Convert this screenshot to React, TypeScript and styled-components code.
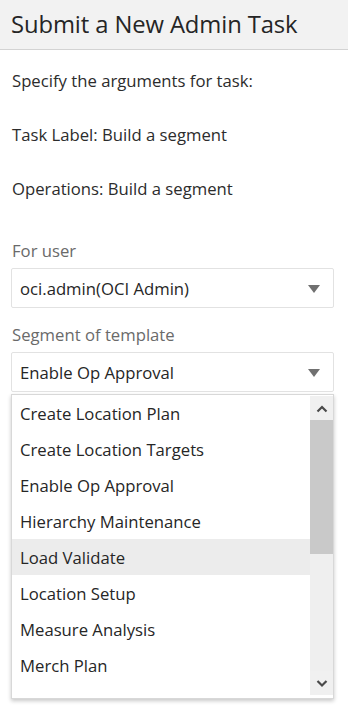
import styled, { createGlobalStyle } from "styled-components";

const GlobalStyle = createGlobalStyle`
  html, body {
    margin: 0;
    padding: 0;
    background: #ffffff;
  }
  body {
    font-family: "Open Sans", "Noto Sans", Arial, sans-serif;
    color: #2c2c2c;
  }
`;

const Page = styled.div`
  width: 348px;
  height: 711px;
  overflow: hidden;
  background: #fff;
`;

const Header = styled.header`
  height: 50px;
  box-sizing: border-box;
  background: #f2f2f2;
  border-bottom: 1px solid #d3d3d3;
  display: flex;
  align-items: center;
  padding: 0 11px 1px;
`;

const Title = styled.h1`
  margin: 0;
  font-size: 23.8px;
  font-weight: 400;
  color: #252525;
  letter-spacing: -0.1px;
`;

const Body = styled.div`
  padding: 19px 14px 0 11px;
  display: flex;
  flex-direction: column;
`;

const Line = styled.p`
  margin: 0;
  height: 54px;
  font-size: 16.7px;
  line-height: 24px;
  padding-left: 1px;
  color: #2c2c2c;
`;

const Field = styled.div<{ gap?: number }>`
  display: flex;
  flex-direction: column;
  margin-top: ${(p) => p.gap ?? 0}px;
  position: relative;
`;

const Label = styled.label`
  font-size: 16.7px;
  line-height: 22px;
  color: #6a6a6a;
  padding-left: 1px;
  margin-bottom: 6px;
`;

const Select = styled.div`
  height: 40px;
  box-sizing: border-box;
  border: 1px solid #e2e2e2;
  border-radius: 2px;
  display: flex;
  align-items: center;
  justify-content: space-between;
  padding: 0 13px 0 8px;
  font-size: 16.7px;
  color: #262626;
  background: #fff;
`;

const Caret = styled.span`
  width: 0;
  height: 0;
  border-left: 6.5px solid transparent;
  border-right: 6.5px solid transparent;
  border-top: 8px solid #707070;
  margin-top: 2px;
`;

const Listbox = styled.div`
  position: absolute;
  top: calc(100% + 2px);
  left: 0;
  right: 0;
  height: 305px;
  box-sizing: border-box;
  border: 1px solid #d8d8d8;
  background: #fff;
  box-shadow: 0 2px 4px rgba(0, 0, 0, 0.22);
  display: flex;
  z-index: 2;
`;

const Options = styled.ul`
  flex: 1;
  margin: 0;
  padding: 0;
  list-style: none;
  overflow: hidden;
`;

const Option = styled.li<{ active?: boolean }>`
  height: 36px;
  display: flex;
  align-items: center;
  padding-left: 8px;
  font-size: 16.7px;
  color: #262626;
  background: ${(p) => (p.active ? "#ececec" : "#fff")};
`;

const Scrollbar = styled.div`
  width: 23px;
  display: flex;
  flex-direction: column;
  background: #efefef;
  margin: 1px 0 3px;
`;

const ScrollButton = styled.div`
  height: 24px;
  display: flex;
  align-items: center;
  justify-content: center;
  background: #f0f0f0;
`;

const Thumb = styled.div`
  height: 134px;
  background: #c9c9c9;
`;

const Track = styled.div`
  flex: 1;
`;

const Chevron = ({ up }: { up?: boolean }) => (
  <svg width="12" height="9" viewBox="0 0 12 9">
    <path
      d={up ? "M1.5 7.5 L6 3 L10.5 7.5" : "M1.5 2 L6 6.5 L10.5 2"}
      fill="none"
      stroke="#4a4a4a"
      strokeWidth="2.2"
    />
  </svg>
);

const templates = [
  "Create Location Plan",
  "Create Location Targets",
  "Enable Op Approval",
  "Hierarchy Maintenance",
  "Load Validate",
  "Location Setup",
  "Measure Analysis",
  "Merch Plan",
];

const App = () => {
  return (
    <Page>
      <GlobalStyle />
      <Header>
        <Title>Submit a New Admin Task</Title>
      </Header>
      <Body>
        <Line>Specify the arguments for task:</Line>
        <Line>Task Label: Build a segment</Line>
        <Line>Operations: Build a segment</Line>
        <Field gap={9}>
          <Label>For user</Label>
          <Select>
            <span>oci.admin(OCI Admin)</span>
            <Caret />
          </Select>
        </Field>
        <Field gap={16}>
          <Label>Segment of template</Label>
          <Select>
            <span>Enable Op Approval</span>
            <Caret />
          </Select>
          <Listbox>
            <Options>
              {templates.map((t) => (
                <Option key={t} active={t === "Load Validate"}>
                  {t}
                </Option>
              ))}
            </Options>
            <Scrollbar>
              <ScrollButton>
                <Chevron up />
              </ScrollButton>
              <Thumb />
              <Track />
              <ScrollButton>
                <Chevron />
              </ScrollButton>
            </Scrollbar>
          </Listbox>
        </Field>
      </Body>
    </Page>
  );
};

export default App;
